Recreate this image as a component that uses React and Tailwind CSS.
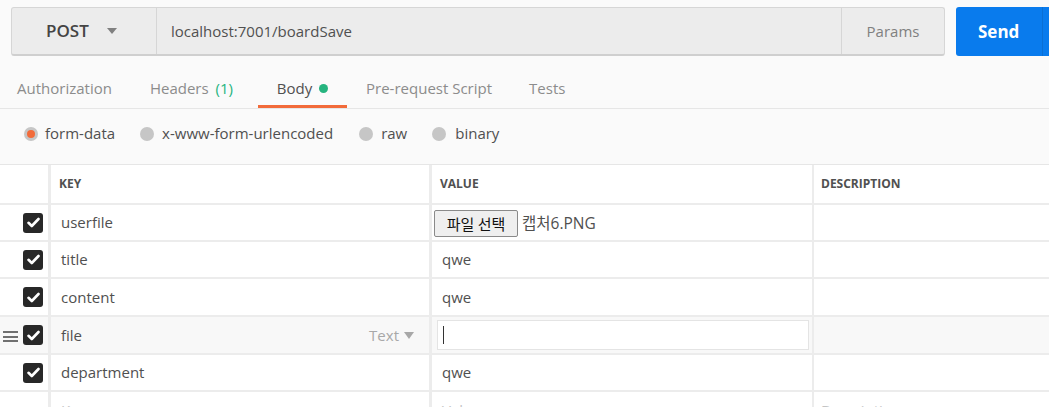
import React from "react";

const font = { fontFamily: '"Open Sans", "Noto Sans CJK KR", sans-serif' };

function Check() {
  return (
    <div className="w-[20px] h-[20px] rounded-[3px] bg-[#282828] flex items-center justify-center">
      <svg width="13" height="11" viewBox="0 0 13 11">
        <path d="M1.5 5.8 L4.8 9 L11.5 2" fill="none" stroke="#fff" strokeWidth="2.6" strokeLinecap="round" strokeLinejoin="round" />
      </svg>
    </div>
  );
}

function Row({ h, keyText, value, hover, first }) {
  return (
    <div className={`flex border-b-2 border-[#ececec] ${hover ? "bg-[#f8f8f8]" : "bg-white"}`} style={{ height: h }}>
      <div className="w-[51px] shrink-0 border-r-[3px] border-[#ececec] flex items-center relative">
        {hover && (
          <div className="absolute left-[3px] top-[14px] flex flex-col gap-[2.5px]">
            <div className="w-[15px] h-[2px] bg-[#707070]" />
            <div className="w-[15px] h-[2px] bg-[#707070]" />
            <div className="w-[15px] h-[2px] bg-[#707070]" />
          </div>
        )}
        <div className="ml-[23px]"><Check /></div>
      </div>
      <div className="w-[381px] shrink-0 border-r-[3px] border-[#ececec] flex items-center pl-[10px] pr-[15px] text-[15px] text-[#505050]">
        <span className="flex-1">{keyText}</span>
        {hover && (
          <span className="text-[#a8a8a8] flex items-center gap-[5px]">
            Text
            <svg width="10" height="7" viewBox="0 0 10 7"><path d="M0 0 H10 L5 7 Z" fill="#a8a8a8" /></svg>
          </span>
        )}
      </div>
      <div className="w-[382px] shrink-0 border-r-2 border-[#ececec] flex items-center text-[15px] text-[#505050]">
        {first ? (
          <div className="flex items-center ml-[2px] mt-[2px]">
            <div
              className="h-[27px] w-[84px] justify-center flex items-center bg-[#efefef] border border-[#8a8a8a] rounded-[2px] text-[15px] text-[#111]"
              style={{ fontFamily: '"Noto Sans CJK KR", sans-serif', lineHeight: "16px" }}
            >
              파일 선택
            </div>
            <span className="ml-[4px] text-[#505050] text-[15.5px]">캡처6.PNG</span>
          </div>
        ) : hover ? (
          <div className="ml-[5px] w-[372px] h-[30px] bg-white border border-[#e4e4e4] flex items-center pl-[5px]">
            <div className="w-[1px] h-[18px] bg-[#333]" />
          </div>
        ) : (
          <span className="pl-[10px]">{value}</span>
        )}
      </div>
      <div className="flex-1" />
    </div>
  );
}

export default function App() {
  return (
    <div className="w-[1049px] h-[407px] bg-[#fafafa] overflow-hidden" style={font}>
      {/* Request bar */}
      <div className="flex pt-[7px] pl-[11px] h-[56px]">
        <div className="flex shrink-0 w-[934px] h-[49px] bg-[#ececec] border border-[#d6d6d6] border-b-2 border-b-[#cfcfcf] rounded-[3px]">
          <div className="w-[145px] shrink-0 border-r border-[#d6d6d6] flex items-center pl-[34px] gap-[18px]">
            <span className="text-[17px] font-semibold text-[#444]">POST</span>
            <svg width="10" height="6" viewBox="0 0 10 6"><path d="M0 0 H10 L5 6 Z" fill="#808080" /></svg>
          </div>
          <div className="flex-1 flex items-center pl-[14px] text-[15px] text-[#505050]">localhost:7001/boardSave</div>
          <div className="w-[103px] shrink-0 border-l border-[#d6d6d6] flex items-center justify-center text-[15px] text-[#808080]">Params</div>
        </div>
        <div className="ml-[11px] shrink-0 w-[100px] h-[49px] bg-[#097bed] rounded-l-[3px] flex items-center">
          <span className="ml-[22px] text-[17px] font-bold text-white">Send</span>
          <div className="ml-[23px] w-[1px] h-full bg-[#0a6fd4]" />
        </div>
      </div>

      {/* Tabs */}
      <div className="h-[53px] border-b border-[#e6e6e6] flex items-stretch pl-[17px] text-[15px] leading-[20px] text-[#8c8c8c]">
        <div className="pt-[22px]">Authorization</div>
        <div className="pt-[22px] ml-[38px] flex">
          <span>Headers</span>
          <span className="ml-[7px] text-[#26b47f]">(1)</span>
        </div>
        <div className="ml-[25px] w-[89px] flex items-start pt-[22px] justify-center border-b-[3px] border-[#f26b3a] text-[#505050] gap-[7px]">
          Body <span className="mt-[6px] w-[9px] h-[9px] rounded-full bg-[#26b47f]" />
        </div>
        <div className="pt-[22px] ml-[19px]">Pre-request Script</div>
        <div className="pt-[22px] ml-[37px]">Tests</div>
      </div>

      {/* Body types */}
      <div className="h-[55px] flex items-center pl-[24px] text-[15px] text-[#505050] pb-[6px]">
        <div className="w-[14px] h-[14px] rounded-full bg-[#c6c6c6] flex items-center justify-center">
          <div className="w-[8px] h-[8px] rounded-full bg-[#f26b3a]" />
        </div>
        <span className="ml-[7px]">form-data</span>
        <div className="ml-[25px] w-[14px] h-[14px] rounded-full bg-[#c6c6c6]" />
        <span className="ml-[8px]">x-www-form-urlencoded</span>
        <div className="ml-[26px] w-[14px] h-[14px] rounded-full bg-[#c6c6c6]" />
        <span className="ml-[8px]">raw</span>
        <div className="ml-[25px] w-[14px] h-[14px] rounded-full bg-[#c6c6c6]" />
        <span className="ml-[9px]">binary</span>
      </div>

      {/* Table */}
      <div className="border-t border-[#e6e6e6] bg-white">
        <div className="flex h-[40px] border-b-2 border-[#ececec] text-[12px] font-bold text-[#505050]">
          <div className="w-[51px] shrink-0 border-r-[3px] border-[#ececec]" />
          <div className="w-[381px] shrink-0 border-r-[3px] border-[#ececec] flex items-center pl-[8px]">KEY</div>
          <div className="w-[382px] shrink-0 border-r-2 border-[#ececec] flex items-center pl-[8px]">VALUE</div>
          <div className="flex-1 flex items-center pl-[7px]">DESCRIPTION</div>
        </div>
        <Row h={37} keyText="userfile" first />
        <Row h={37} keyText="title" value="qwe" />
        <Row h={38} keyText="content" value="qwe" />
        <Row h={38} keyText="file" hover />
        <Row h={37} keyText="department" value="qwe" />
        <div className="flex h-[40px] text-[15px] text-[#c4c4c4]">
          <div className="w-[51px] shrink-0 border-r-[3px] border-[#ececec]" />
          <div className="w-[381px] shrink-0 border-r-[3px] border-[#ececec] pl-[10px] pt-[7px]">Key</div>
          <div className="w-[382px] shrink-0 border-r-2 border-[#ececec] pl-[10px] pt-[7px]">Value</div>
          <div className="flex-1 pl-[7px] pt-[7px]">Description</div>
        </div>
      </div>
    </div>
  );
}
